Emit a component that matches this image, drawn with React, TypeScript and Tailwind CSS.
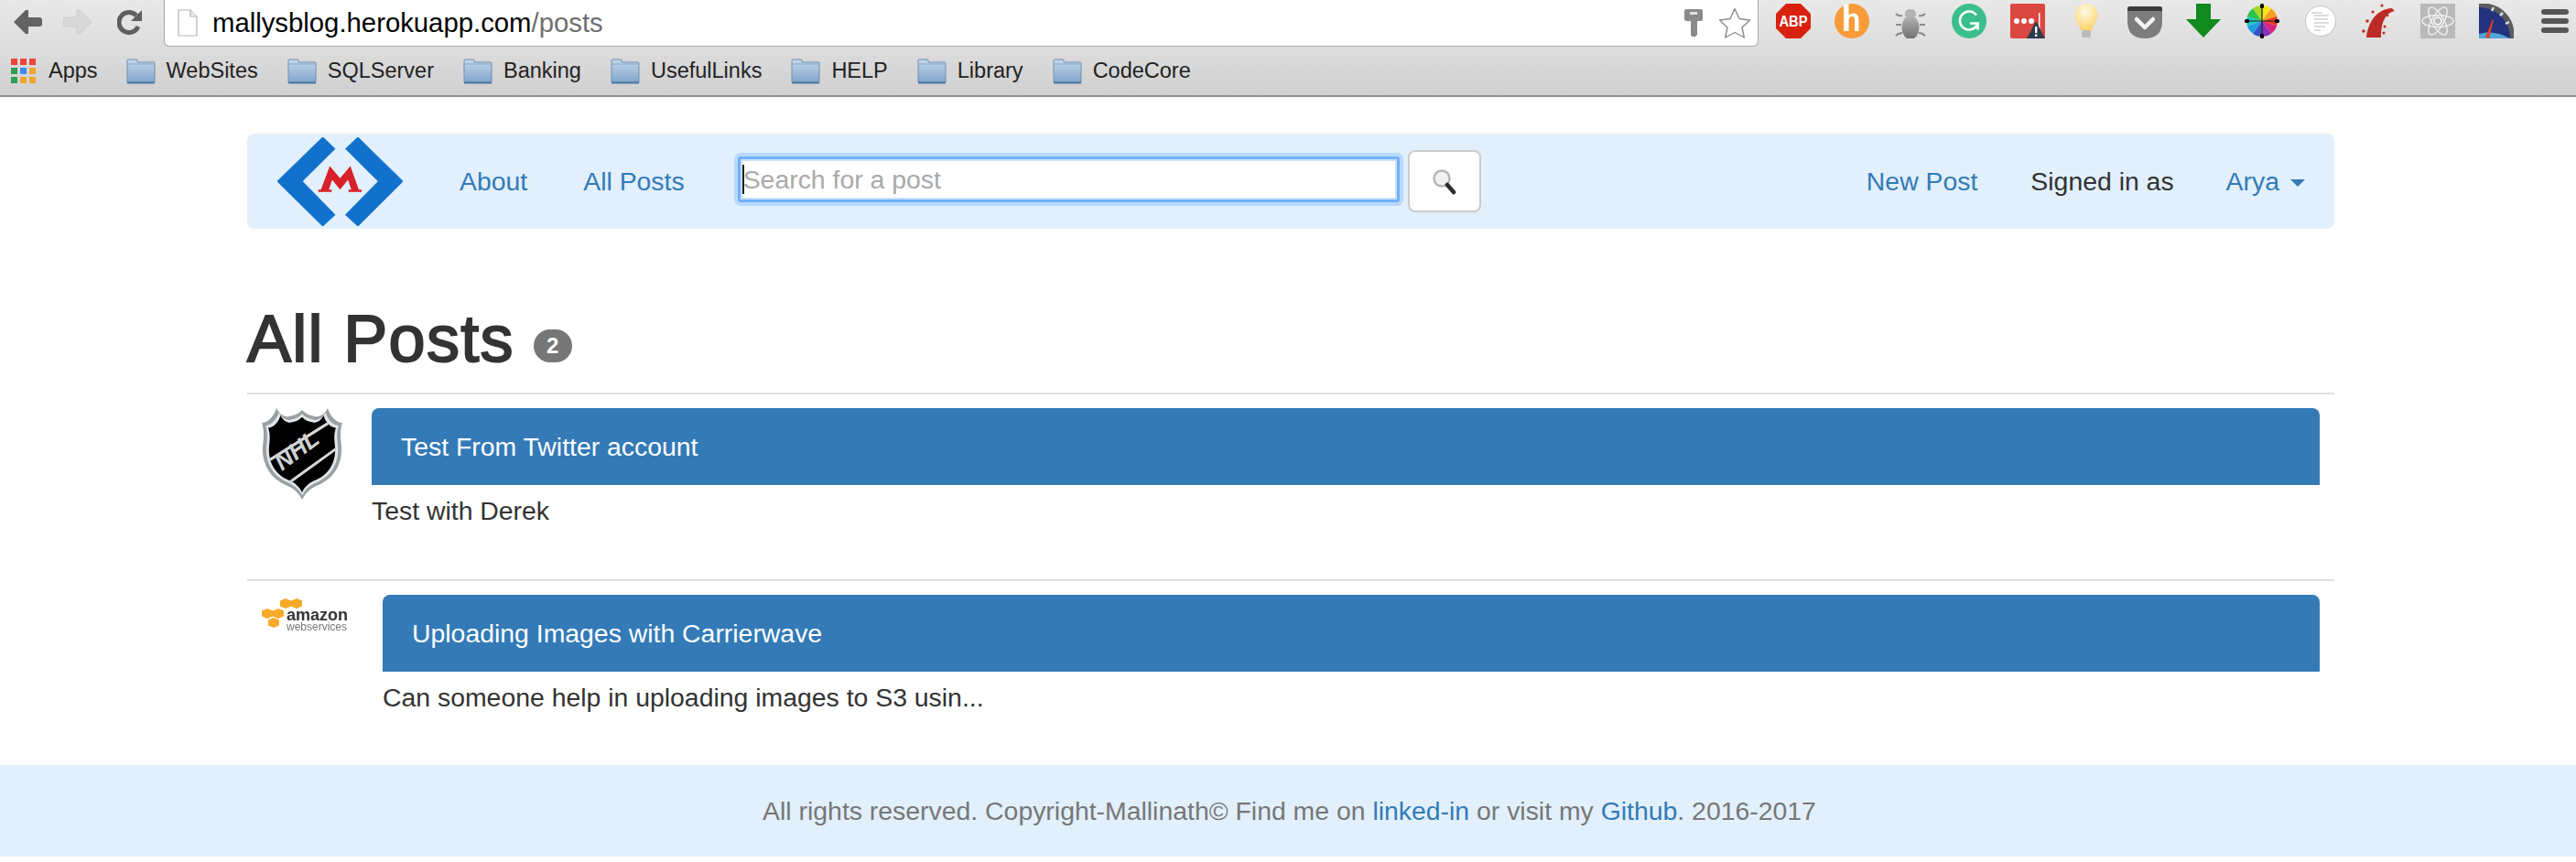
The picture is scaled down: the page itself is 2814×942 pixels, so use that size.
const font = "[font-family:'Liberation_Sans',Arial,sans-serif]";

function BackArrow({ color }: { color: string }) {
  return (
    <svg width="32" height="28" viewBox="0 0 32 28">
      <path d="M14 1 1 14l13 13h3v-8h12a3 3 0 0 0 3-3v-4a3 3 0 0 0-3-3H17V1z" fill={color} />
    </svg>
  );
}

function ForwardArrow({ color }: { color: string }) {
  return (
    <svg width="32" height="28" viewBox="0 0 32 28">
      <path d="M18 1l13 13-13 13h-3v-8H3a3 3 0 0 1-3-3v-4a3 3 0 0 1 3-3h12V1z" fill={color} stroke="#bdbdbd" strokeWidth="0.5" />
    </svg>
  );
}

function Reload() {
  return (
    <svg width="28" height="28" viewBox="0 0 28 28">
      <path d="M23 19a11 11 0 1 1-2-12" fill="none" stroke="#5f5f5f" strokeWidth="5" />
      <path d="M27 1v12H15z" fill="#5f5f5f" />
    </svg>
  );
}

function PageIcon() {
  return (
    <svg width="22" height="30" viewBox="0 0 22 30">
      <path d="M1 1h13l7 7v21H1z" fill="#fff" stroke="#b4b4b4" strokeWidth="1.2" />
      <path d="M14 1v7h7" fill="#f0f0f0" stroke="#b4b4b4" strokeWidth="1.2" />
    </svg>
  );
}

function Folder() {
  return (
    <svg width="32" height="28" viewBox="0 0 32 28">
      <defs>
        <linearGradient id="fold" x1="0" y1="0" x2="0" y2="1">
          <stop offset="0" stopColor="#c6d8ea" />
          <stop offset="1" stopColor="#7fa5cb" />
        </linearGradient>
      </defs>
      <path d="M1 6V2q0-1 1-1h9q1 0 1 1v2h18q1 0 1 1v21H1z" fill="url(#fold)" stroke="#6f8fb2" strokeWidth="1" />
      <path d="M1 6h30" stroke="#8aa8c6" strokeWidth="1" />
      <path d="M1 26.5h30" stroke="#4f77a3" strokeWidth="2" />
    </svg>
  );
}

function AppsGrid() {
  const colors = ["#e8453c", "#e8453c", "#e8453c", "#2f9e55", "#3b8ef0", "#f2a52c", "#2f9e55", "#f2a52c", "#f2a52c"];
  return (
    <div className="grid grid-cols-3 gap-x-[3px] gap-y-[3px]">
      {colors.map((c, i) => (
        <span key={i} className="h-[7px] w-[7px]" style={{ backgroundColor: c }} />
      ))}
    </div>
  );
}

const ext = { width: 38, height: 38, viewBox: "0 0 38 38" };

function Abp() {
  return (
    <svg {...ext}>
      <path d="M11 0h16l11 11v16L27 38H11L0 27V11z" fill="#d8220f" />
      <text x="19" y="25" textAnchor="middle" fontFamily="Liberation Sans" fontWeight="700" fontSize="16" fill="#fff" textLength="31" lengthAdjust="spacingAndGlyphs">ABP</text>
    </svg>
  );
}

function Honey() {
  return (
    <svg {...ext}>
      <circle cx="19" cy="19" r="19" fill="#f89b38" />
      <path d="M10 1l5.500-1v12.500q2-2 5-2 6 0 6 7V30H22V18q0-4-3-4-3.500 0-3.500 4.500V30H10z" fill="#fff" />
    </svg>
  );
}

function Bug() {
  return (
    <svg {...ext}>
      <defs>
        <linearGradient id="bug" x1="0" y1="0" x2="0" y2="1">
          <stop offset="0" stopColor="#b5b5b5" />
          <stop offset="1" stopColor="#6f6f6f" />
        </linearGradient>
      </defs>
      <path d="M13 14v-3q0-5 6-5t6 5v3z" fill="#b3b3b3" />
      <ellipse cx="19" cy="26" rx="9.500" ry="13" fill="url(#bug)" />
      <path d="M3 14q3 3 7 2M35 14q-3 3-7 2M3 26h6M35 26h-6M3 38q3-3 7-3M35 38q-3-3-7-3" transform="translate(0 -3)" stroke="#8a8a8a" strokeWidth="2" fill="none" />
    </svg>
  );
}

function Grammarly() {
  return (
    <svg {...ext}>
      <circle cx="19" cy="19" r="19" fill="#3abf8c" />
      <path d="M27 12.500a10 10 0 1 0 1.500 9H20" fill="none" stroke="#fff" strokeWidth="2.600" />
      <path d="M28.500 21.500v7" stroke="#fff" strokeWidth="2.600" />
    </svg>
  );
}

function LastPass() {
  return (
    <svg {...ext}>
      <rect width="38" height="38" rx="2" fill="#db4741" />
      <circle cx="7" cy="19" r="3" fill="#fff" />
      <circle cx="15" cy="19" r="3" fill="#fff" />
      <circle cx="23" cy="19" r="3" fill="#fff" />
      <rect x="31" y="10" width="1.500" height="18" fill="#fff" />
      <path d="M28 19l10 19H18z" fill="#2f3d4c" />
      <rect x="27" y="25" width="2.400" height="7" fill="#fff" />
      <rect x="27" y="33.500" width="2.400" height="2.400" fill="#fff" />
    </svg>
  );
}

function Bulb() {
  return (
    <svg {...ext}>
      <defs>
        <radialGradient id="bulb" cx="0.45" cy="0.3" r="0.7">
          <stop offset="0" stopColor="#fffbe8" />
          <stop offset="1" stopColor="#fbd36a" />
        </radialGradient>
      </defs>
      <path d="M19 0c7 0 12.500 6 12.500 12.500 0 6-5 10-6.500 17h-12c-1.500-7-6.500-11-6.500-17C6.500 6 12 0 19 0z" fill="url(#bulb)" />
      <rect x="14" y="29" width="10" height="8" rx="2" fill="#bcbcbc" />
    </svg>
  );
}

function Pocket() {
  return (
    <svg {...ext}>
      <path d="M0 6q0-3 3-3h32q3 0 3 3v13q0 19-19 19T0 19z" fill="#7c7c7c" />
      <path d="M0 6q0-3 3-3h32q3 0 3 3v2H0z" fill="#3a3a3a" />
      <path d="M10 17l9 9 9-9" fill="none" stroke="#f4f4f4" strokeWidth="4.500" strokeLinecap="round" strokeLinejoin="round" />
    </svg>
  );
}

function GreenArrow() {
  return (
    <svg {...ext}>
      <path d="M11 0h16v17h11L19 37 0 17h11z" fill="#118a1e" />
    </svg>
  );
}

function Wheel() {
  const hues = ["#f7e51e", "#f7a21e", "#ef3b24", "#d6247f", "#8a2fb8", "#3a50c8", "#1f9de0", "#20c7c0", "#2fc24a", "#a6d821"];
  return (
    <svg {...ext}>
      {hues.map((c, i) => {
        const a = (i * 36 - 90) * (Math.PI / 180);
        const b = ((i + 1) * 36 - 90) * (Math.PI / 180);
        return (
          <path
            key={c}
            d={`M19 19L${19 + 17 * Math.cos(a)} ${19 + 17 * Math.sin(a)}A17 17 0 0 1 ${19 + 17 * Math.cos(b)} ${19 + 17 * Math.sin(b)}z`}
            fill={c}
          />
        );
      })}
      <path d="M19 1v36M2 19h34" stroke="#222" strokeWidth="1.200" />
      <rect x="17" y="0" width="4" height="5" rx="1.500" fill="#000" />
      <rect x="17" y="33" width="4" height="5" rx="1.500" fill="#000" />
      <rect x="0" y="17" width="5" height="4" rx="1.500" fill="#000" />
      <rect x="33" y="17" width="5" height="4" rx="1.500" fill="#000" />
    </svg>
  );
}

function Note() {
  return (
    <svg {...ext}>
      <circle cx="19" cy="19" r="16.500" fill="#fff" stroke="#c4c4c4" />
      <path d="M9 10h12M12 13h16M12 17h15M12 21h16M12 25h12M12 29h7" stroke="#b9b9b9" strokeWidth="1" />
    </svg>
  );
}

function Rails() {
  return (
    <svg {...ext}>
      <path d="M5 37C7 20 16 6 33 5l3 3C25 10 21 22 21 37z" fill="#bd2b26" />
      <g fill="#bd2b26">
        <circle cx="2" cy="30" r="1.800" />
        <circle cx="6" cy="19" r="1.800" />
        <circle cx="12" cy="9" r="1.600" />
        <circle cx="22" cy="2" r="1.500" />
        <circle cx="25" cy="25" r="1.500" />
        <circle cx="24" cy="32" r="1.500" />
        <circle cx="22" cy="18" r="1.400" />
        <circle cx="28" cy="13" r="1.300" />
      </g>
    </svg>
  );
}

function ReactIcon() {
  return (
    <svg {...ext}>
      <rect width="38" height="38" fill="#b9b9b9" />
      <g fill="none" stroke="#f2f2f2" strokeWidth="1.400">
        <ellipse cx="19" cy="19" rx="17" ry="6.500" />
        <ellipse cx="19" cy="19" rx="17" ry="6.500" transform="rotate(60 19 19)" />
        <ellipse cx="19" cy="19" rx="17" ry="6.500" transform="rotate(120 19 19)" />
      </g>
      <circle cx="19" cy="19" r="4" fill="none" stroke="#f2f2f2" strokeWidth="2" />
    </svg>
  );
}

function Speed() {
  return (
    <svg {...ext}>
      <path d="M0 0h10c14 2 26 14 28 28v10H0z" fill="#5c5c5c" />
      <path d="M0 4c18 0 34 14 34 34H0z" fill="#24337f" />
      <path d="M0 33c10-3 22-2 34 5H0z" fill="#4fa6d6" />
      <path d="M7 37l8-20 1 1-5 20z" fill="#e0412a" />
      <path d="M14 8l2-4M23 13l3-3M29 22l4-2" stroke="#d9dfea" strokeWidth="2.500" />
    </svg>
  );
}

function Menu() {
  return (
    <div className="flex h-[38px] w-[38px] flex-col gap-[4px] pt-[6px] pl-[4px]">
      <span className="h-[6px] w-[30px] rounded-[3px] bg-[#555]" />
      <span className="h-[6px] w-[30px] rounded-[3px] bg-[#555]" />
      <span className="h-[6px] w-[30px] rounded-[3px] bg-[#555]" />
    </div>
  );
}

function Key() {
  return (
    <svg width="20" height="30" viewBox="0 0 20 30">
      <path d="M2 0h16q2 0 2 2v9q0 2-2 2h-4v15l-2 2H8l-1-2V13H2q-2 0-2-2V2q0-2 2-2z" fill="#8a8a8a" />
      <rect x="6" y="3" width="8" height="3" fill="#e2e2e2" />
    </svg>
  );
}

function Star() {
  return (
    <svg width="36" height="34" viewBox="0 0 36 34">
      <path d="M18 1.500l5 11 11.500 1.500-8.500 8 2.300 11L18 27.500 7.700 33 10 22l-8.500-8L13 12.500z" fill="#fff" stroke="#8c8c8c" strokeWidth="1.400" strokeLinejoin="round" />
    </svg>
  );
}

const extensions = [Abp, Honey, Bug, Grammarly, LastPass, Bulb, Pocket, GreenArrow, Wheel, Note, Rails, ReactIcon, Speed, Menu];
const bookmarks = ["WebSites", "SQLServer", "Banking", "UsefulLinks", "HELP", "Library", "CodeCore"];

function BrowserChrome() {
  return (
    <div className="border-b-2 border-[#8f8f8f] bg-gradient-to-b from-[#e9e9e9] to-[#d0d0d0]">
      <div className="flex h-[51px] items-start">
        <div className="flex w-[179px] items-center pt-[10px] pl-[14px]">
          <BackArrow color="#636363" />
          <span className="ml-[23px]"><ForwardArrow color="#d8d8d8" /></span>
          <span className="ml-[27px]"><Reload /></span>
        </div>
        <div className="flex h-[51px] w-[1742px] items-center rounded-b-[6px] border border-t-0 border-[#a9a9a9] bg-white pl-[14px]">
          <PageIcon />
          <span className="ml-[16px] text-[29.3px] leading-none text-black">
            mallysblog.herokuapp.com<span className="text-[#6f6f6f]">/posts</span>
          </span>
          <span className="ml-auto"><Key /></span>
          <span className="mr-[7px] ml-[17px]"><Star /></span>
        </div>
        <div className="ml-[19px] flex items-center gap-[26px] pt-[4px]">
          {extensions.map((Icon, i) => (
            <Icon key={i} />
          ))}
        </div>
      </div>
      <div className="flex h-[53px] items-center pl-[12px] text-[23.5px] text-[#222]">
        <AppsGrid />
        <span className="ml-[14px]">Apps</span>
        {bookmarks.map((name, i) => (
          <div key={name} className={`flex items-center gap-[12px] ${i === 0 ? "ml-[31px]" : "ml-[32px]"}`}>
            <Folder />
            <span>{name}</span>
          </div>
        ))}
      </div>
    </div>
  );
}

function Logo() {
  return (
    <svg width="137" height="97" viewBox="85 60 268 292" preserveAspectRatio="none">
      <path d="M182 60l26 38-70 107 70 110-26 37-97-147z" fill="#1271cc" stroke="#1271cc" strokeWidth="2" strokeLinejoin="round" />
      <path d="M257 60l-26 38 70 107-70 110 26 37 96-147z" fill="#1271cc" stroke="#1271cc" strokeWidth="2" strokeLinejoin="round" />
      <path d="M172 232h6L197 155l22 40 22-40 18 77h6v8h-28v-8h6l-7-32-17 32-17-32-7 32h6v8h-28z" fill="#d8212a" />
    </svg>
  );
}

function Magnifier() {
  return (
    <svg width="26" height="30" viewBox="0 0 26 30">
      <circle cx="10" cy="12" r="8.500" fill="#f1f1f1" stroke="#b5b5b5" strokeWidth="2.500" />
      <path d="M16 19l7 8" stroke="#2b2b2b" strokeWidth="4.500" strokeLinecap="round" />
    </svg>
  );
}

function Navbar() {
  return (
    <nav className="flex h-[104px] items-center rounded-lg bg-[#e1f0fc] pr-[32px] pl-[33px] text-[28.4px] text-[#337ab7]">
      <Logo />
      <a className="ml-[62px]">About</a>
      <a className="ml-[61px]">All Posts</a>
      <div className="relative mb-[4px] ml-[58px] h-[50px] w-[723px]">
        <input
          placeholder="Search for a post"
          className="h-full w-full rounded-[3px] border-[3px] border-[#72b0fa] bg-white pl-[3px] text-[28.4px] shadow-[0_0_0_4px_#b9d9fb,inset_0_0_0_2px_#c8e1fb] outline-none placeholder:text-[#a9a9a9]"
        />
        <span className="absolute top-[9px] left-[5px] h-[32px] w-[2px] bg-[#222]" />
      </div>
      <button className="ml-[9px] flex h-[68px] w-[80px] items-center justify-center rounded-lg border-2 border-[#ccc] bg-white">
        <Magnifier />
      </button>
      <a className="ml-auto">New Post</a>
      <span className="ml-[58px] text-[#333]">Signed in as</span>
      <a className="ml-[57px]">Arya</a>
      <span className="mt-[4px] ml-[12px] h-0 w-0 border-x-[8px] border-t-[8px] border-x-transparent border-t-[#337ab7]" />
    </nav>
  );
}

function NhlLogo() {
  const outer =
    "M0 16C6 16 13 10 16 0C20 8 26 10 30 9C36 8 40 6 44 2C48 6 52 8 58 9C62 10 68 8 72 0C75 10 82 16 88 16C85 25 86 32 87 42C88 60 80 76 62 84C54 87 48 92 44 100C40 92 34 87 26 84C8 76 0 60 1 42C2 32 3 25 0 16z";
  return (
    <svg width="88" height="100" viewBox="0 0 88 100" className="shrink-0">
      <defs>
        <clipPath id="shield">
          <path d={outer} transform="translate(7 8) scale(0.84)" />
        </clipPath>
      </defs>
      <path d={outer} fill="#9a9fa2" />
      <path d={outer} fill="#e4e5e6" transform="translate(4 4.500) scale(0.91)" />
      <path d={outer} fill="#000" transform="translate(7 8) scale(0.84)" />
      <g clipPath="url(#shield)">
        <path d="M0 62L86 8M18 90L90 38" stroke="#d8d8d8" strokeWidth="3" />
      </g>
      <text x="0" y="0" transform="translate(22 69) rotate(-37)" fontFamily="Liberation Sans" fontWeight="700" fontStyle="italic" fontSize="26" fill="#cfd1d2">NHL</text>
    </svg>
  );
}

function AwsLogo() {
  const cubes = [[20, 1], [32, 1], [0, 12], [12, 12], [7, 22]];
  return (
    <svg width="100" height="40" viewBox="0 0 100 40" className="mt-[3px] shrink-0 blur-[0.4px]">
      {cubes.map(([x, y]) => (
        <path key={`${x}-${y}`} d={`M${x} ${y + 2.500}l6-2.500 6 2.500v6l-6 2.500-6-2.500z`} fill="#f7a928" />
      ))}
      <text x="27" y="25" fontFamily="Liberation Sans" fontWeight="700" fontSize="18" fill="#333">amazon</text>
      <text x="27" y="36" fontFamily="Liberation Sans" fontSize="12" fill="#777" textLength="66">webservices</text>
    </svg>
  );
}

function Post({ logo, title, body, last }: { logo: React.ReactNode; title: string; body: string; last?: boolean }) {
  return (
    <article className={`flex gap-[32px] border-t-2 border-[#e0e0e0] pt-[15px] pr-[16px] pl-[16px] ${last ? "pb-[54px]" : "pb-[55px]"}`}>
      {logo}
      <div className="min-w-0 flex-1">
        <h3 className="flex h-[84px] items-center rounded-t-lg bg-[#337ab7] px-[32px] text-[28.4px] text-white">{title}</h3>
        <p className="mt-[8px] text-[28.4px] leading-[40px] text-[#333]">{body}</p>
      </div>
    </article>
  );
}

export default function App() {
  return (
    <div className={`${font} min-h-[942px] bg-white`}>
      <BrowserChrome />
      <main className="pt-[40px] pr-[264px] pl-[270px]">
        <Navbar />
        <div className="mt-[81px] mb-[19px] flex items-start">
          <h1 className="text-[72px] leading-[79px] tracking-[1.3px] text-[#333] [-webkit-text-stroke:2px_#333]">All Posts</h1>
          <span className="mt-[29px] ml-[21px] flex h-[36px] w-[42px] items-center justify-center rounded-full bg-[#777] text-[24px] font-bold text-white">2</span>
        </div>
        <Post logo={<NhlLogo />} title="Test From Twitter account" body="Test with Derek" />
        <Post logo={<AwsLogo />} title="Uploading Images with Carrierwave" body="Can someone help in uploading images to S3 usin..." last />
      </main>
      <footer className="flex h-[100px] items-center justify-center bg-[#e1f0fc] pl-[3px] text-[28.4px] text-[#777]">
        <p>
          All rights reserved. Copyright-Mallinath© Find me on <a className="text-[#337ab7]">linked-in</a> or visit my{" "}
          <a className="text-[#337ab7]">Github</a>. 2016-2017
        </p>
      </footer>
    </div>
  );
}
